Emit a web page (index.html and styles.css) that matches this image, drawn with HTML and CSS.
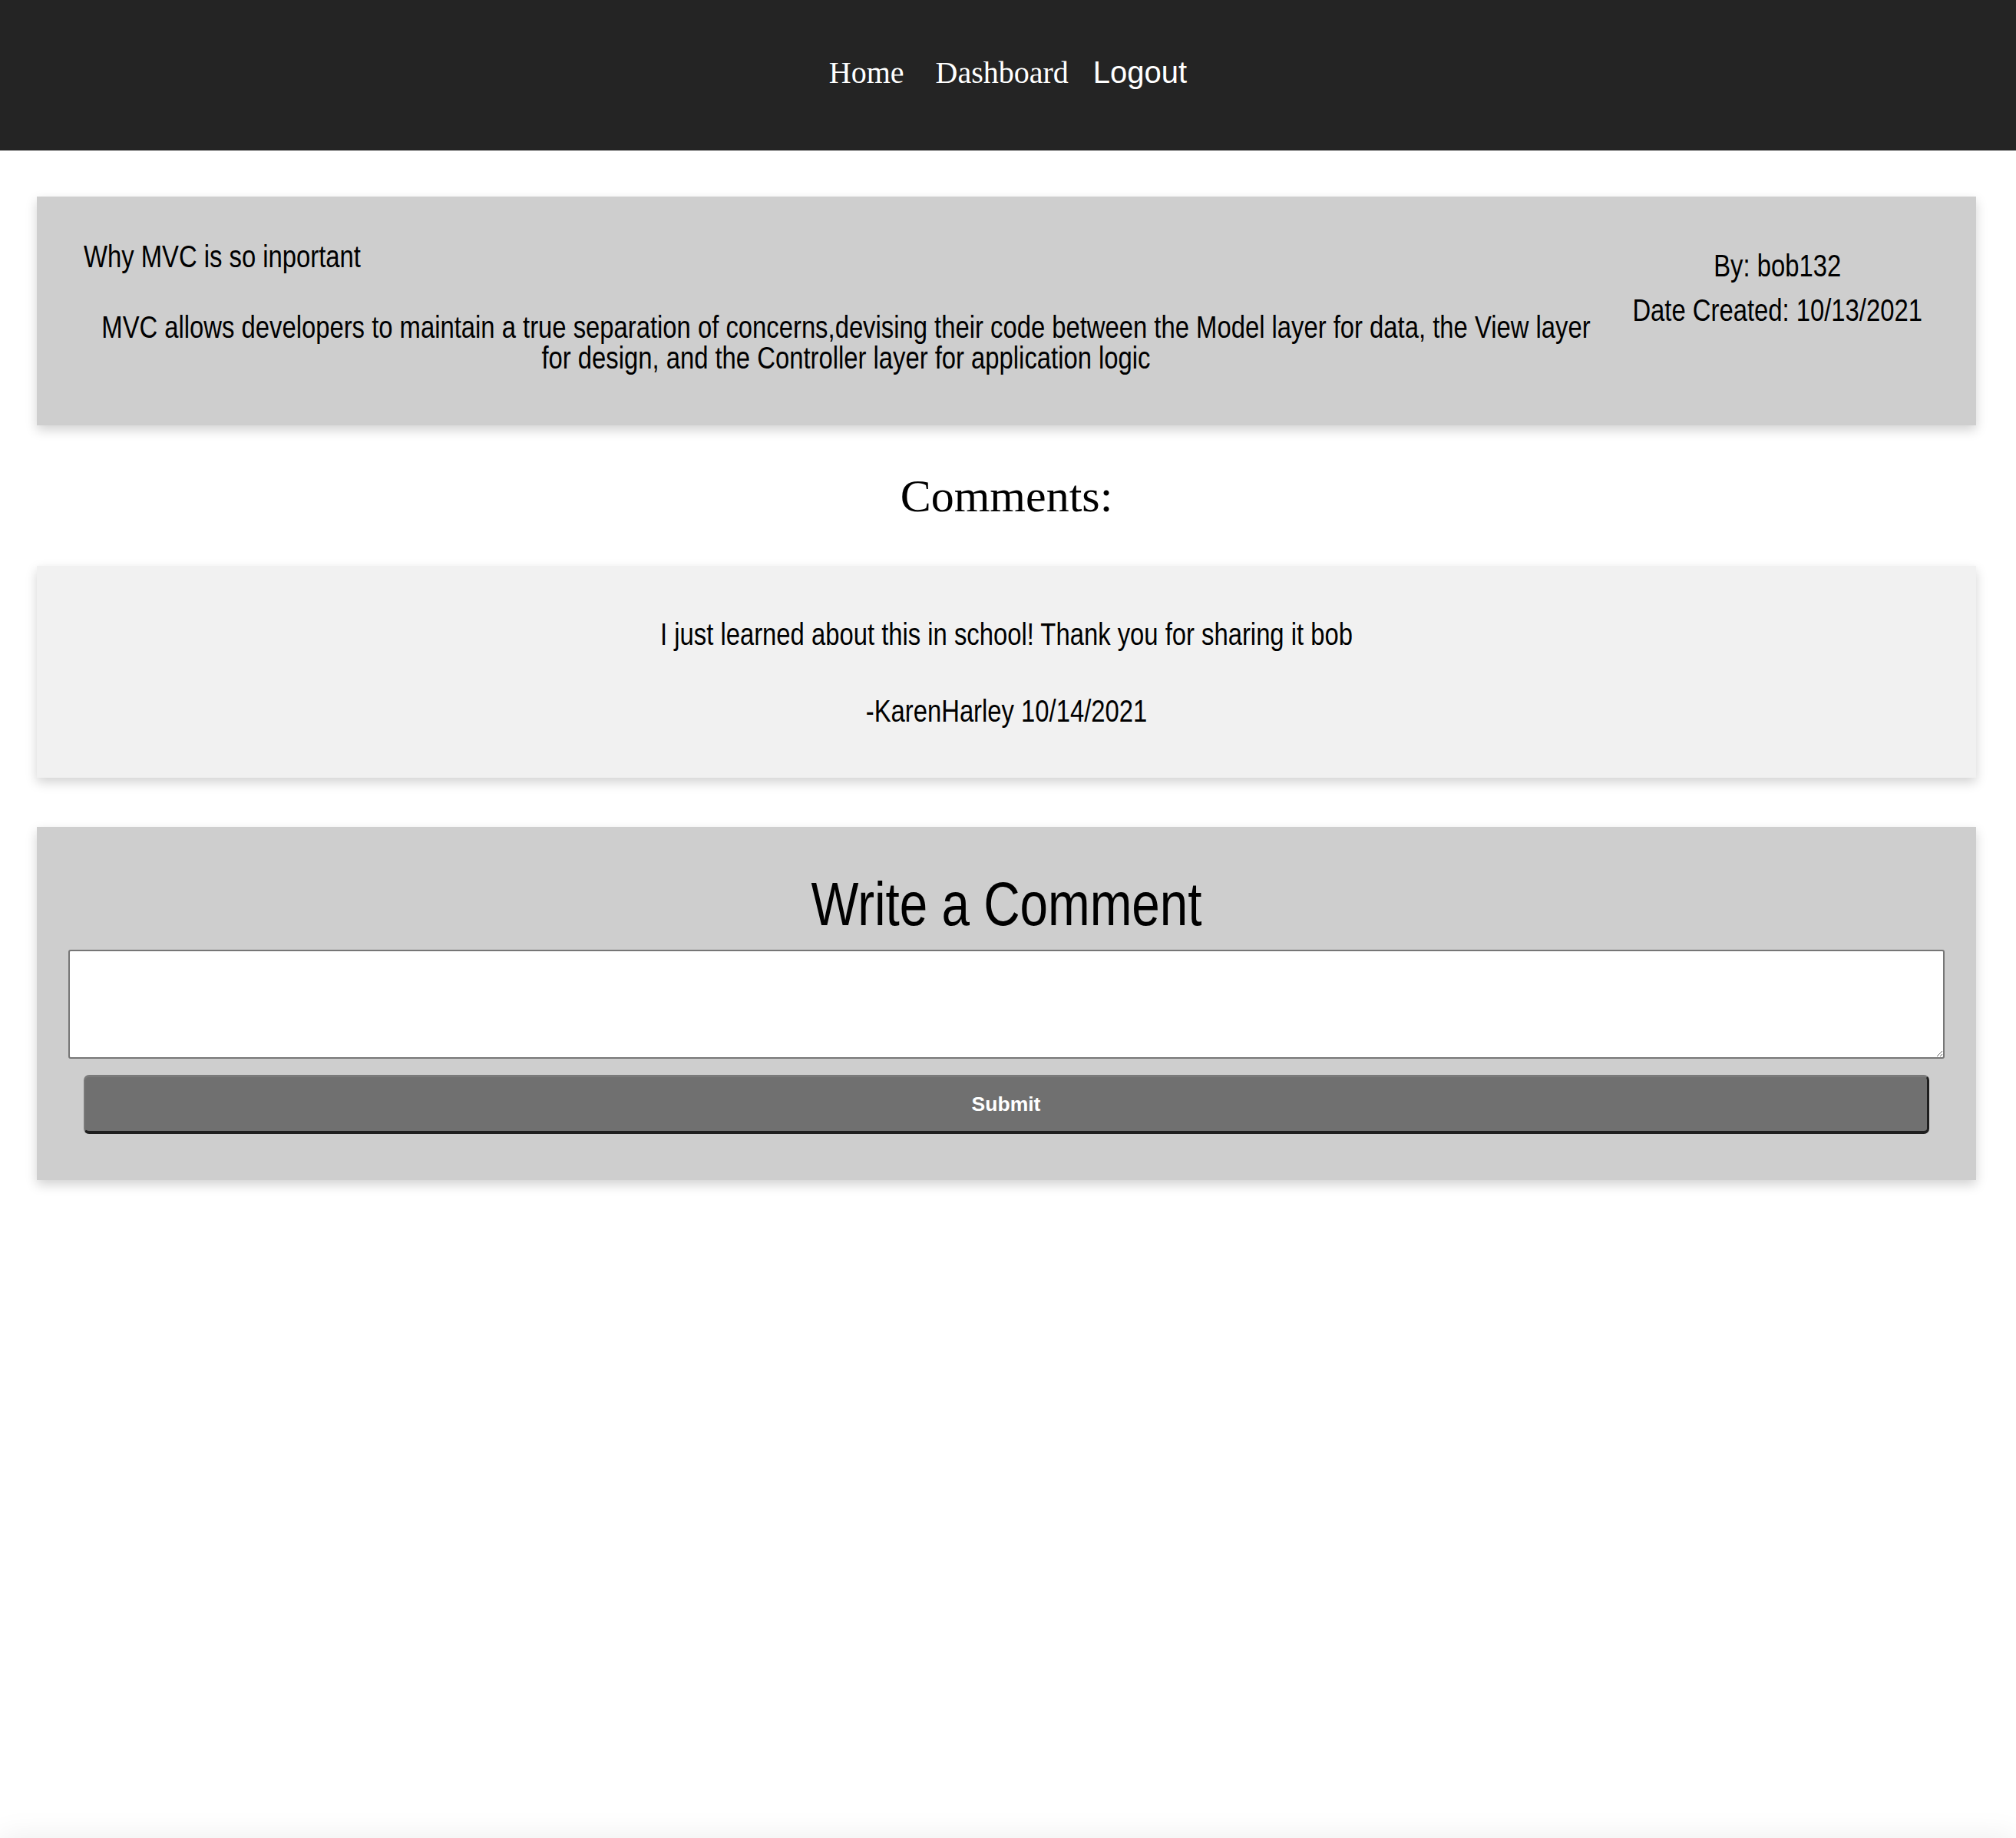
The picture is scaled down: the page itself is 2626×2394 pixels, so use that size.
FILE: index.html
```html
<!DOCTYPE html>
<html lang="en">
<head>
<meta charset="utf-8">
<title>Why MVC is so inportant</title>
<link rel="stylesheet" href="styles.css">
</head>
<body>
<div class="page">
  <header class="site-header">
    <nav class="nav">
      <a class="nav-link nav-home" href="#">Home</a>
      <a class="nav-link nav-dash" href="#">Dashboard</a>
      <button class="nav-logout" type="button">Logout</button>
    </nav>
  </header>
  <main class="content">
    <article class="post">
      <div class="post-main">
        <h2 class="post-title narrow">Why MVC is so inportant</h2>
        <p class="post-body narrow">MVC allows developers to maintain a true separation of concerns,devising their code between the Model layer for data, the View layer for design, and the Controller layer for application logic</p>
      </div>
      <div class="post-meta">
        <p class="meta-line narrow">By: bob132</p>
        <p class="meta-line meta-date narrow">Date Created: 10/13/2021</p>
      </div>
    </article>

    <h2 class="comments-heading">Comments:</h2>

    <section class="comment">
      <p class="comment-text narrow">I just learned about this in school! Thank you for sharing it bob</p>
      <p class="comment-author narrow">-KarenHarley 10/14/2021</p>
    </section>

    <form class="comment-form">
      <h2 class="form-heading">Write a Comment</h2>
      <textarea class="comment-input" name="comment"></textarea>
      <button class="submit-btn" type="submit">Submit</button>
    </form>
  </main>
</div>
<footer class="site-footer"></footer>
</body>
</html>
```
FILE: styles.css
```css
html, body {
  margin: 0;
  padding: 0;
  background: #ffffff;
}

body {
  font-family: "Liberation Serif", "Times New Roman", serif;
  color: #000;
}

.page {
  min-height: 100vh;
  display: flex;
  flex-direction: column;
}

/* ---------- header ---------- */
.site-header {
  background: #242424;
  height: 196px;
  box-sizing: border-box;
  padding-top: 71px;
}

.nav {
  display: flex;
  justify-content: center;
  align-items: baseline;
}

.nav-link {
  font-family: "Liberation Serif", "Times New Roman", serif;
  font-size: 40px;
  color: #ffffff;
  text-decoration: none;
}

.nav-home { margin-right: 41px; }
.nav-dash { margin-right: 32px; }

.nav-logout {
  font-family: "Liberation Sans", Arial, sans-serif;
  font-size: 40px;
  color: #ffffff;
  background: none;
  border: 0;
  padding: 0;
}

/* ---------- narrow sans text (Arial Narrow look) ---------- */
.narrow {
  font-family: "Liberation Sans", Arial, sans-serif;
  font-size: 40px;
  line-height: 40px;
  font-weight: normal;
  transform: scaleX(0.82);
}

/* ---------- content ---------- */
.content {
  padding: 60px 52px 0 48px;
}

.post {
  display: flex;
  background: #cecece;
  padding: 58px 76px 68px 61px;
  box-shadow: 0 6px 14px rgba(0, 0, 0, 0.18);
}

.post-main {
  flex: 1;
  min-width: 0;
}

.post-title {
  margin: 0;
  width: max-content;
  transform-origin: left center;
}

.post-body {
  margin: 52px 0 0 -10.976%;
  width: 121.95%;
  text-align: center;
}

.post-meta {
  width: 365px;
  margin-left: 38px;
  margin-top: 12px;
  display: flex;
  flex-direction: column;
  align-items: center;
}

.meta-line {
  margin: 0;
  white-space: nowrap;
}

.meta-date {
  margin-top: 18px;
}

.comments-heading {
  margin: 58px 0 56px;
  font-family: "Liberation Serif", "Times New Roman", serif;
  font-size: 60px;
  font-weight: normal;
  line-height: 69px;
  text-align: center;
}

.comment {
  background: #f1f1f1;
  padding: 69px 40px 67px;
  box-shadow: 0 6px 14px rgba(0, 0, 0, 0.18);
  text-align: center;
}

.comment-text {
  margin: 0;
}

.comment-author {
  margin: 60px 0 0;
}

.comment-form {
  display: flex;
  flex-direction: column;
  margin-top: 64px;
  background: #cecece;
  padding: 53px 41px 60px;
  box-shadow: 0 6px 14px rgba(0, 0, 0, 0.18);
}

.form-heading {
  margin: 0 0 11px;
  font-family: "Liberation Sans", Arial, sans-serif;
  font-size: 80px;
  font-weight: normal;
  line-height: 96px;
  text-align: center;
  transform: scaleX(0.82);
}

.comment-input {
  box-sizing: border-box;
  width: 100%;
  height: 142px;
  border: 2px solid #767676;
  border-radius: 3px;
  background: #ffffff;
  margin: 0;
  padding: 4px;
  font-family: "Liberation Sans", Arial, sans-serif;
  font-size: 24px;
}

.submit-btn {
  box-sizing: border-box;
  margin: 21px 20px 0;
  height: 77px;
  background: #707070;
  color: #ffffff;
  font-family: "Liberation Sans", Arial, sans-serif;
  font-weight: bold;
  font-size: 26.5px;
  border-radius: 7px;
  border-top: 3px solid #7a7a7a;
  border-left: 2px solid #7a7a7a;
  border-right: 3px solid #1f1f1f;
  border-bottom: 4px solid #1f1f1f;
}

.site-footer {
  height: 60px;
  background: #f7f7f7;
  box-shadow: 0 0 40px rgba(0, 0, 0, 0.08);
}
```
